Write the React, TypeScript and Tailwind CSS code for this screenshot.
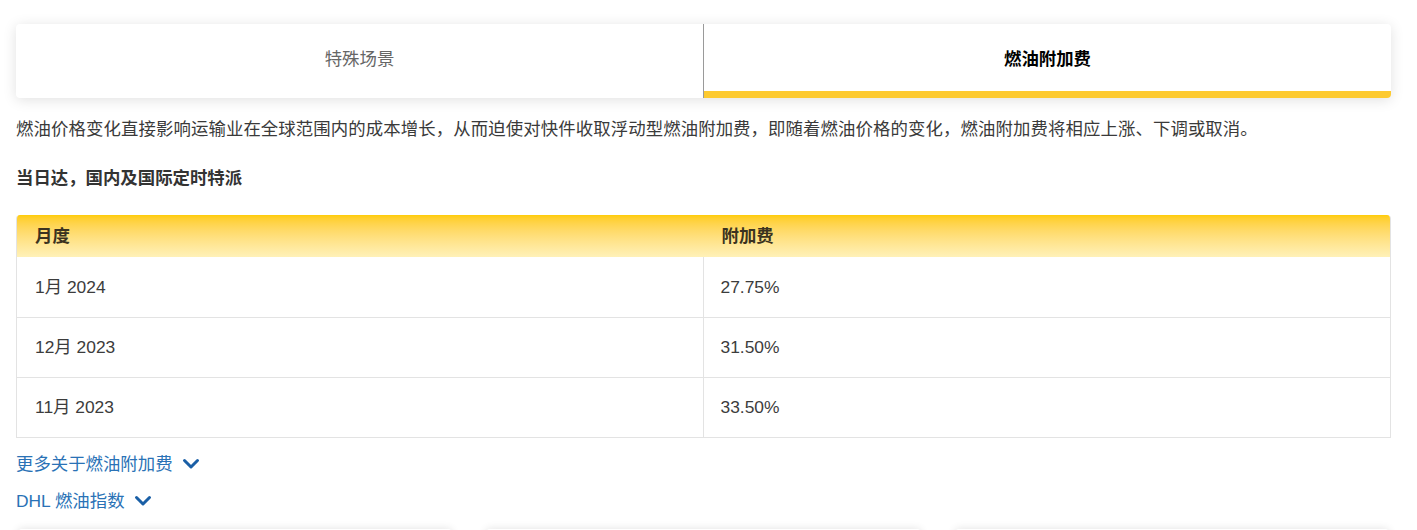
import React from "react";

const font = { fontFamily: '"Liberation Sans", "Noto Sans CJK SC", sans-serif' };

function Chevron() {
  return (
    <svg width="18" height="12" viewBox="0 0 18 12" className="ml-[9px] shrink-0">
      <path d="M2.5 2.5 L9 9 L15.5 2.5" fill="none" stroke="#1a5fa6" strokeWidth="3" strokeLinecap="round" strokeLinejoin="round" />
    </svg>
  );
}

const rows = [
  ["1月 2024", "27.75%"],
  ["12月 2023", "31.50%"],
  ["11月 2023", "33.50%"],
];

export default function App() {
  return (
    <div className="h-[530px] overflow-hidden bg-white text-[#333]" style={font}>
      <div className="ml-4 w-[1375px] pt-6">
        {/* Tabs */}
        <div className="flex h-[74px] overflow-hidden rounded-[4px] bg-white shadow-[0_2px_14px_rgba(0,0,0,0.12)]">
          <div className="flex flex-1 items-center justify-center pb-[4px] text-[17.4px] text-[#666]">
            特殊场景
          </div>
          <div className="flex flex-1 flex-col border-l border-[#9a9a9a]">
            <div className="flex flex-1 items-center justify-center pt-[4px] text-[17.4px] font-bold text-black">
              燃油附加费
            </div>
            <div className="h-[7px] bg-[#fdca30]" />
          </div>
        </div>

        <p className="mt-[18px] text-[17.4px] leading-[26px] tracking-[0.1px] text-[#3a3a3a]">
          燃油价格变化直接影响运输业在全球范围内的成本增长，从而迫使对快件收取浮动型燃油附加费，即随着燃油价格的变化，燃油附加费将相应上涨、下调或取消。
        </p>

        <h3 className="mt-[23px] text-[17.4px] font-bold leading-[26px] text-[#333]">
          当日达，国内及国际定时特派
        </h3>

        {/* Table */}
        <div className="mt-[24px] overflow-hidden rounded-t-[4px] border-x border-b border-[#e3e3e3]">
          <div className="grid h-[42px] grid-cols-2 bg-gradient-to-b from-[#ffcc00] to-[#fff1b8] text-[17.4px] font-bold text-[#3b3320]">
            <div className="flex items-center pl-[18px]">月度</div>
            <div className="flex items-center pl-[18px]">附加费</div>
          </div>
          {rows.map(([m, v], i) => (
            <div
              key={m}
              className={`grid h-[60px] grid-cols-2 text-[17.4px] text-[#3c3c3c] ${i > 0 ? "border-t border-[#e3e3e3]" : ""}`}
            >
              <div className="flex items-center border-r border-[#e3e3e3] pl-[18px]">{m}</div>
              <div className="flex items-center pl-[17px]">{v}</div>
            </div>
          ))}
        </div>

        {/* Links */}
        <div className="mt-[13px] flex h-[26px] items-center text-[17.4px] text-[#2a72b6]">
          更多关于燃油附加费
          <Chevron />
        </div>
        <div className="mt-[11px] flex h-[26px] items-center text-[17.4px] text-[#2a72b6]">
          DHL 燃油指数
          <Chevron />
        </div>

        {/* Cards */}
        <div className="mt-[15px] grid grid-cols-3 gap-[34px] px-[2px]">
          <div className="h-[200px] rounded-[4px] bg-white shadow-[0_0_8px_rgba(0,0,0,0.12)]" />
          <div className="h-[200px] rounded-[4px] bg-white shadow-[0_0_8px_rgba(0,0,0,0.12)]" />
          <div className="h-[200px] rounded-[4px] bg-white shadow-[0_0_8px_rgba(0,0,0,0.12)]" />
        </div>
      </div>
    </div>
  );
}
